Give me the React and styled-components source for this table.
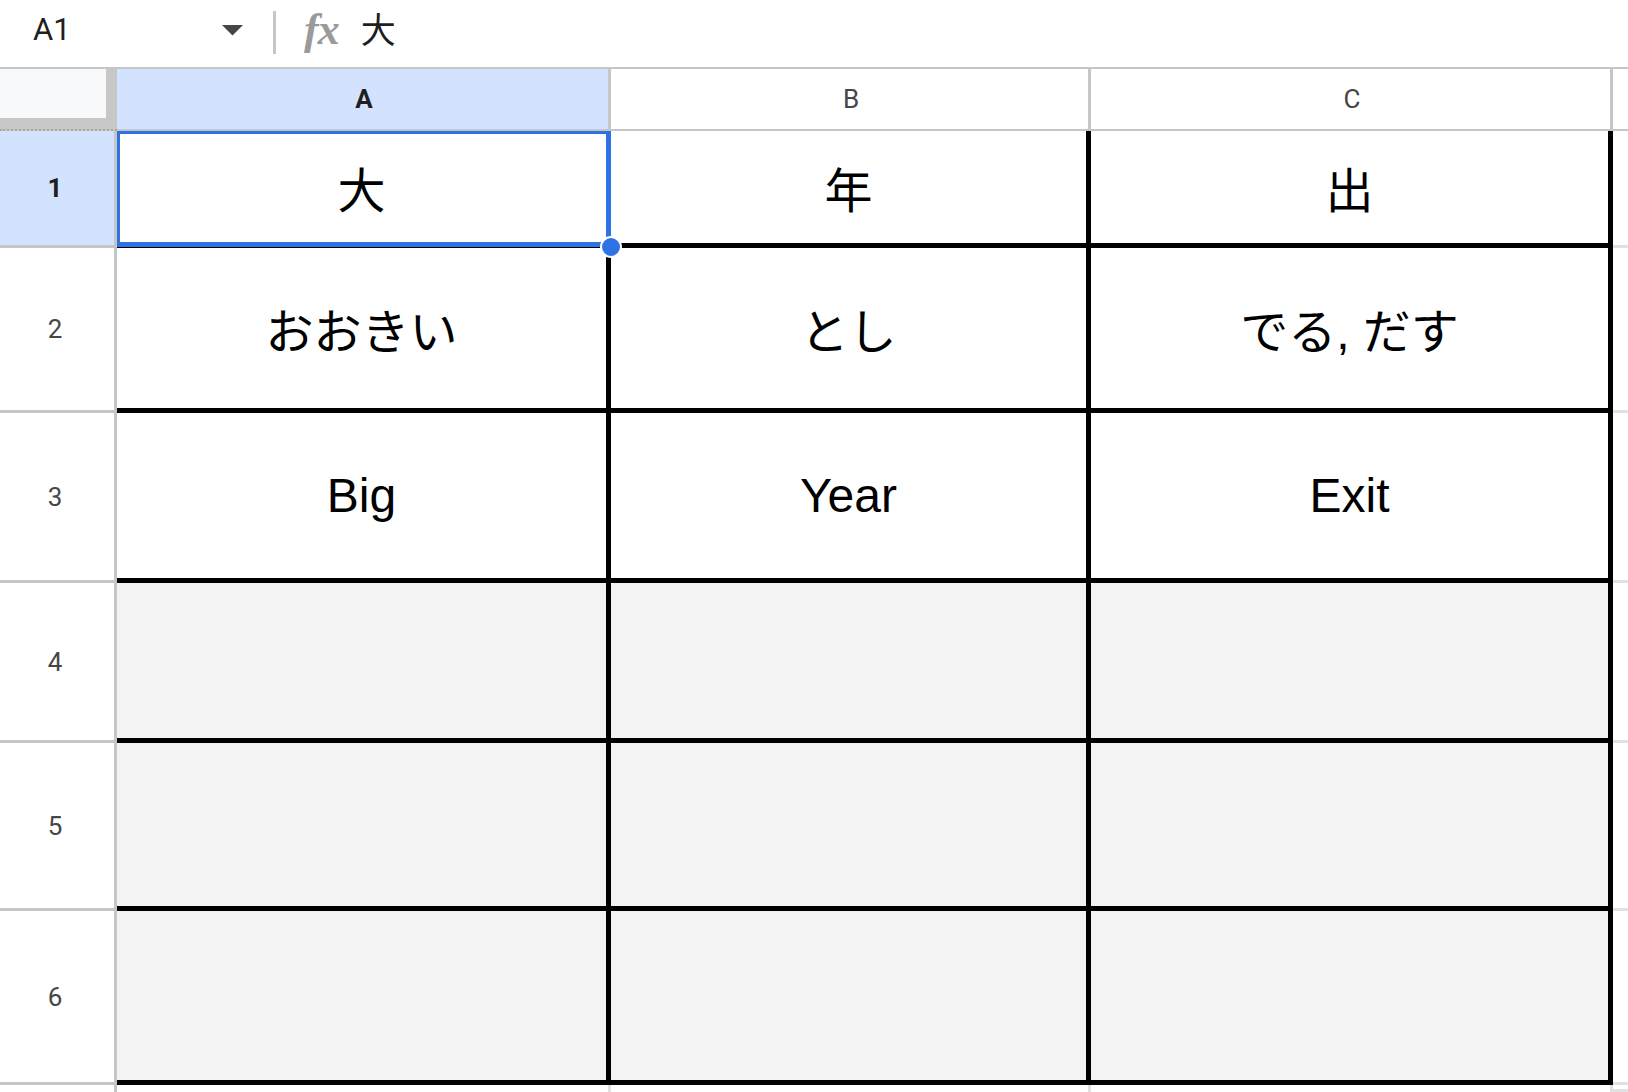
import React from 'react'
import styled, { createGlobalStyle } from 'styled-components'

const GlobalStyle = createGlobalStyle`
  html, body {
    margin: 0;
    padding: 0;
    background: #fff;
    overflow: hidden;
  }
  body {
    font-family: Roboto, "Liberation Sans", Arial, sans-serif;
  }
`

const GRID = '#c4c7c5'
const FAINT = '#e1e1e1'
const SELECT = '#2f72e4'
const ACTIVE_HEAD = '#d3e3fd'

const columns = [
  { name: 'A', width: 494 },
  { name: 'B', width: 480 },
  { name: 'C', width: 522 },
]

const rows = [
  { id: 1, height: 117, cells: ['大', '年', '出'] },
  { id: 2, height: 165, cells: ['おおきい', 'とし', 'でる, だす'] },
  { id: 3, height: 170, cells: ['Big', 'Year', 'Exit'] },
  { id: 4, height: 160, cells: ['', '', ''], shaded: true },
  { id: 5, height: 168, cells: ['', '', ''], shaded: true },
  { id: 6, height: 174, cells: ['', '', ''], shaded: true },
]

const App = () => {
  const rowTemplate = ['62px', ...rows.map((r) => r.height + 'px'), '1fr'].join(' ')
  const colTemplate = ['117px', ...columns.map((c) => c.width + 'px'), '1fr'].join(' ')

  return (
    <Page>
      <GlobalStyle />
      <FormulaBar>
        <NameBox>
          <span>A1</span>
          <svg width="21" height="11" viewBox="0 0 21 11">
            <path d="M0 0 L21 0 L10.5 10.5 Z" fill="#444746" />
          </svg>
        </NameBox>
        <Divider />
        <FxIcon>fx</FxIcon>
        <FormulaText>大</FormulaText>
      </FormulaBar>

      <Sheet $cols={colTemplate} $rows={rowTemplate}>
        <Corner>
          <CornerBox />
        </Corner>
        {columns.map((c) => (
          <ColHeader key={c.name} $active={c.name === 'A'}>{c.name}</ColHeader>
        ))}
        <ColHeader $filler />

        {rows.map((r) => (
          <React.Fragment key={r.id}>
            <RowHeader $active={r.id === 1}>{r.id}</RowHeader>
            {r.cells.map((text, i) => (
              <Cell key={i} $shaded={r.shaded} $selected={r.id === 1 && i === 0}>
                {text}
                {r.id === 1 && i === 0 && (
                  <Selection>
                    <Handle />
                  </Selection>
                )}
              </Cell>
            ))}
            <FillerCell />
          </React.Fragment>
        ))}

        <RowHeader $last />
        {columns.map((c) => (
          <BlankCell key={c.name} />
        ))}
        <FillerCell />
      </Sheet>
    </Page>
  )
}

export default App

const Page = styled.div`
  height: 100vh;
  display: flex;
  flex-direction: column;
  overflow: hidden;
`

const FormulaBar = styled.div`
  height: 67px;
  flex-shrink: 0;
  display: flex;
  align-items: center;
  border-bottom: 2px solid ${GRID};
  background: #fff;
`

const NameBox = styled.div`
  width: 243px;
  padding-left: 33px;
  box-sizing: border-box;
  display: flex;
  align-items: center;
  justify-content: space-between;
  font-family: Roboto, "Liberation Sans", sans-serif;
  font-size: 31px;
  color: #1f1f1f;
  margin-right: 30px;

  span {
    margin-top: -8px;
  }
  svg {
    margin-top: -6px;
  }
`

const Divider = styled.div`
  width: 3px;
  height: 43px;
  background: ${GRID};
  margin-right: 28px;
  margin-top: -2px;
`

const FxIcon = styled.div`
  font-family: "Liberation Serif", "DejaVu Serif", serif;
  font-style: italic;
  font-weight: bold;
  font-size: 44px;
  letter-spacing: -1px;
  color: #9a9a9a;
  margin-top: -8px;
  margin-right: 22px;
`

const FormulaText = styled.div`
  font-family: "Liberation Sans", "Noto Sans CJK JP", sans-serif;
  font-size: 35px;
  color: #1f1f1f;
  margin-top: -12px;
`

const Sheet = styled.div`
  flex: 1;
  display: grid;
  grid-template-columns: ${(p) => p.$cols};
  grid-template-rows: ${(p) => p.$rows};
  overflow: hidden;
`

const Corner = styled.div`
  background: #c7c7c7;
  border-bottom: 2px dotted #a8a8a8;
  box-sizing: border-box;
`

const CornerBox = styled.div`
  width: 106px;
  height: 49px;
  background: #f8f9fa;
`

const ColHeader = styled.div`
  box-sizing: border-box;
  display: flex;
  align-items: center;
  justify-content: center;
  background: ${(p) => (p.$active ? ACTIVE_HEAD : '#fff')};
  border-right: ${(p) => (p.$filler ? 'none' : `3px solid ${GRID}`)};
  border-bottom: 2px solid ${GRID};
  font-family: Roboto, "Liberation Sans", sans-serif;
  font-size: 26px;
  font-weight: ${(p) => (p.$active ? 700 : 400)};
  color: ${(p) => (p.$active ? '#1f1f1f' : '#444746')};
  padding-left: 3px;
`

const RowHeader = styled.div`
  box-sizing: border-box;
  display: flex;
  align-items: center;
  justify-content: center;
  padding-right: 4px;
  background: ${(p) => (p.$active ? ACTIVE_HEAD : '#fff')};
  border-right: 3px solid ${GRID};
  border-bottom: ${(p) => (p.$last ? 'none' : `3px solid ${GRID}`)};
  font-family: Roboto, "Liberation Sans", sans-serif;
  font-size: 26px;
  font-weight: ${(p) => (p.$active ? 700 : 400)};
  color: ${(p) => (p.$active ? '#1f1f1f' : '#444746')};
`

const Cell = styled.div`
  position: relative;
  z-index: ${(p) => (p.$selected ? 2 : 0)};
  box-sizing: border-box;
  display: flex;
  align-items: center;
  justify-content: center;
  background: ${(p) => (p.$shaded ? '#f3f3f3' : '#fff')};
  border-right: 5px solid #000;
  border-bottom: 5px solid #000;
  font-family: "Liberation Sans", "Noto Sans CJK JP", sans-serif;
  font-size: 48px;
  color: #000;
  white-space: nowrap;
`

const BlankCell = styled.div`
  box-sizing: border-box;
  background: #fff;
  border-right: 3px solid ${FAINT};
`

const FillerCell = styled.div`
  box-sizing: border-box;
  background: #fff;
  border-bottom: 3px solid ${FAINT};
`

const Selection = styled.div`
  position: absolute;
  top: 0;
  left: 0;
  right: -5px;
  bottom: -4px;
  border-style: solid;
  border-color: ${SELECT};
  border-width: 3px 5px 5px 3px;
  pointer-events: none;
`

const Handle = styled.div`
  position: absolute;
  right: -16px;
  bottom: -16px;
  width: 18px;
  height: 18px;
  border-radius: 50%;
  background: ${SELECT};
  border: 2px solid #fff;
`
